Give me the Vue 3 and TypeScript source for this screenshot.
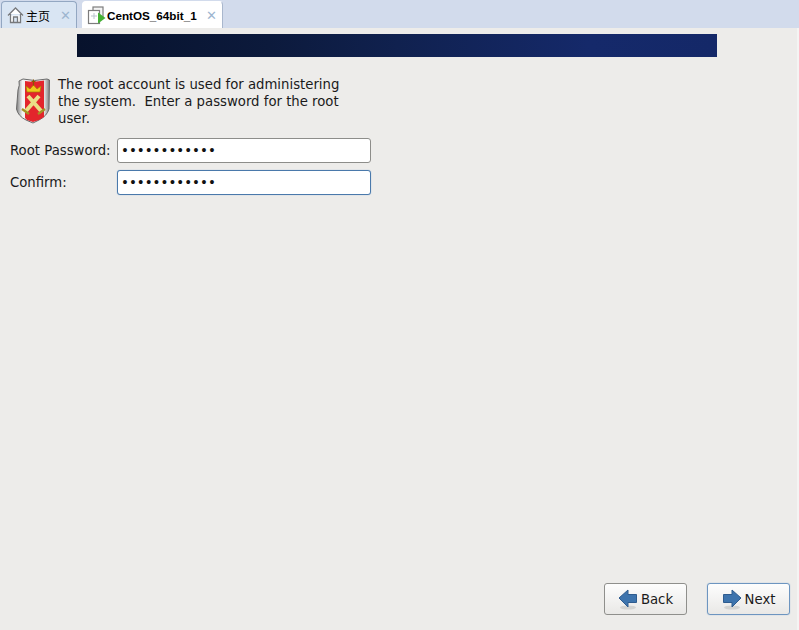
<script setup lang="ts">
interface Field {
  label: string;
  focused: boolean;
}

const fields: Field[] = [
  { label: 'Root Password:', focused: false },
  { label: 'Confirm:', focused: true },
];
const dots = '••••••••••••';
</script>

<template>
  <div class="window">
    <div class="tabs">
      <div class="tab home">
        <svg class="tab-icon" width="17" height="18" viewBox="0 0 17 18">
          <path d="M1 9.500 8.500 2 16 9.500M3.500 8v8.500h10V8M6.500 16.500V11h4v5.500" fill="#fff" stroke="#77797c" stroke-width="1.300" />
        </svg>
        <span class="tab-text cjk">主页</span>
        <span class="close">✕</span>
      </div>
      <div class="tab active">
        <svg class="tab-icon" width="19" height="20" viewBox="0 0 19 20">
          <rect x="6" y="2" width="10" height="11" fill="#f4f4f4" stroke="#7c7c7c" stroke-width="1.200" />
          <rect x="1.500" y="5.500" width="11" height="13" fill="#fff" stroke="#7c7c7c" stroke-width="1.200" />
          <path d="M4 11h6M7 8v6" stroke="#b9c3cc" fill="none" />
          <path d="M11 7.500 18.500 13 11 18.500z" fill="#45b035" />
        </svg>
        <span class="tab-text strong">CentOS_64bit_1</span>
        <span class="close">✕</span>
      </div>
    </div>

    <div class="page">
      <div class="banner"></div>

      <div class="intro">
        <svg class="shield" width="36" height="48" viewBox="0 0 36 48">
          <defs>
            <linearGradient id="metal" x1="0" x2="1" y1="0" y2="0">
              <stop offset="0" stop-color="#7c7c7c" />
              <stop offset="0.180" stop-color="#f2f2f2" />
              <stop offset="0.820" stop-color="#f2f2f2" />
              <stop offset="1" stop-color="#7c7c7c" />
            </linearGradient>
          </defs>
          <path d="M4 5 L8 3 Q19 6 32 3 L34.500 4 L34 33 Q32 40 24 44 L18 47 L11 44 Q3 40 1.500 33 L3 14 Q5 9 4 5Z" fill="url(#metal)" stroke="#6a6a6a" />
          <path d="M10 5 Q19 6.500 29 4.500 L29 41 L24 44 L18 46 L12 44 L10 42 Z" fill="#e3252c" />
          <path d="M11 10 15 13 18.500 9 22 13 26 10 25 16H12Z" fill="#efc91d" stroke="#a67c00" stroke-width="0.700" />
          <path d="M18.500 3.500v6M16.500 5.500h4" stroke="#8a5a00" stroke-width="1.200" />
          <path d="M10 36 24 20M27 36 13 20" stroke="#eadf86" stroke-width="4" />
          <path d="M7 33l7 5M30 33l-7 5" stroke="#a49224" stroke-width="2.200" />
        </svg>
        <p class="intro-text">The root account is used for administering<br />the system.&nbsp; Enter a password for the root<br />user.</p>
      </div>

      <div class="form">
        <template v-for="field in fields" :key="field.label">
          <label class="field-label">{{ field.label }}</label>
          <div class="input" :class="{ focused: field.focused }">{{ dots }}</div>
        </template>
      </div>

      <div class="spacer"></div>

      <div class="actions">
        <button class="btn">
          <svg width="20" height="24" viewBox="0 0 20 24">
            <ellipse cx="10" cy="20.500" rx="8" ry="2" fill="#d4d4d2" />
            <path d="M1 11 10 3v4.500h8.500v8H10V20z" fill="#3e74ad" stroke="#2f5c8f" />
          </svg>
          <span>Back</span>
        </button>
        <button class="btn primary">
          <svg width="20" height="24" viewBox="0 0 20 24">
            <ellipse cx="10" cy="20.500" rx="8" ry="2" fill="#d4d4d2" />
            <path d="M19 11 10 3v4.500H1.500v8H10V20z" fill="#3e74ad" stroke="#2f5c8f" />
          </svg>
          <span>Next</span>
        </button>
      </div>
    </div>
  </div>
</template>

<style>
html,
body {
  margin: 0;
  background: #edecea;
}
</style>

<style scoped>
.window {
  width: 799px;
  height: 630px;
  display: flex;
  flex-direction: column;
  font-family: "DejaVu Sans", sans-serif;
  font-size: 13.25px;
  color: #1a1a1a;
  background: #edecea;
  overflow: hidden;
}

.tabs {
  height: 28px;
  box-sizing: border-box;
  padding: 1px 0 0 1px;
  display: flex;
  gap: 5px;
  background: #d2dbec;
}

.tab {
  height: 27px;
  box-sizing: border-box;
  display: flex;
  align-items: center;
  border: 1px solid #93a7c2;
  border-bottom: none;
  border-radius: 4px 4px 0 0;
}

.home {
  width: 76px;
  padding-left: 5px;
  background: #d9e5f3;
}

.active {
  width: 141px;
  padding-left: 4px;
  background: #fff;
  border-color: #fff #a9b7cd #fff #fff;
}

.tab-icon {
  flex-shrink: 0;
}

.tab-text {
  margin-left: 1px;
  font-size: 12px;
  color: #000;
  white-space: nowrap;
}

.cjk {
  margin-left: 2px;
  font-family: "Noto Sans CJK SC", sans-serif;
}

.strong {
  font-family: "Liberation Sans", sans-serif;
  font-weight: 700;
  font-size: 11.7px;
}

.close {
  margin-left: auto;
  margin-right: 5px;
  font-size: 13px;
  line-height: 1;
  font-weight: 700;
  color: #9db5cf;
}

.page {
  flex: 1;
  display: flex;
  flex-direction: column;
  min-height: 0;
  border-right: 2px solid #f4f4f3;
}

.banner {
  width: 640px;
  height: 23px;
  margin: 6px 0 0 77px;
  background: linear-gradient(90deg, #07122c 0%, #0c1a3c 30%, #10214f 50%, #15296a 80%, #142868 100%);
}

.intro {
  display: flex;
  margin: 19px 0 0 15px;
  gap: 7px;
}

.shield {
  flex-shrink: 0;
}

.intro-text {
  margin: 0;
  line-height: 17px;
}

.form {
  display: grid;
  grid-template-columns: 107px 254px;
  row-gap: 7px;
  margin: 11px 0 0 10px;
  align-items: center;
}

.input {
  height: 25px;
  box-sizing: border-box;
  padding-left: 3px;
  line-height: 23px;
  font-size: 13.4px;
  color: #111;
  background: #fff;
  border: 1px solid #8d8d8a;
  border-radius: 3px;
}

.input.focused {
  border-color: #4a79ab;
  box-shadow: 0 0 1px #7fa3c9;
}

.spacer {
  flex: 1;
}

.actions {
  display: flex;
  justify-content: flex-end;
  gap: 20px;
  padding-right: 7px;
  margin-bottom: 15px;
}

.btn {
  width: 83px;
  height: 32px;
  display: flex;
  align-items: center;
  justify-content: center;
  gap: 3px;
  padding: 0;
  font: inherit;
  color: #1a1a1a;
  background: linear-gradient(#fdfdfd, #e9e8e6);
  border: 1px solid #8f8f8c;
  border-radius: 3px;
}

.btn.primary {
  border-color: #6d95c0;
  box-shadow: 0 0 1px #7fa3c9;
}
</style>
